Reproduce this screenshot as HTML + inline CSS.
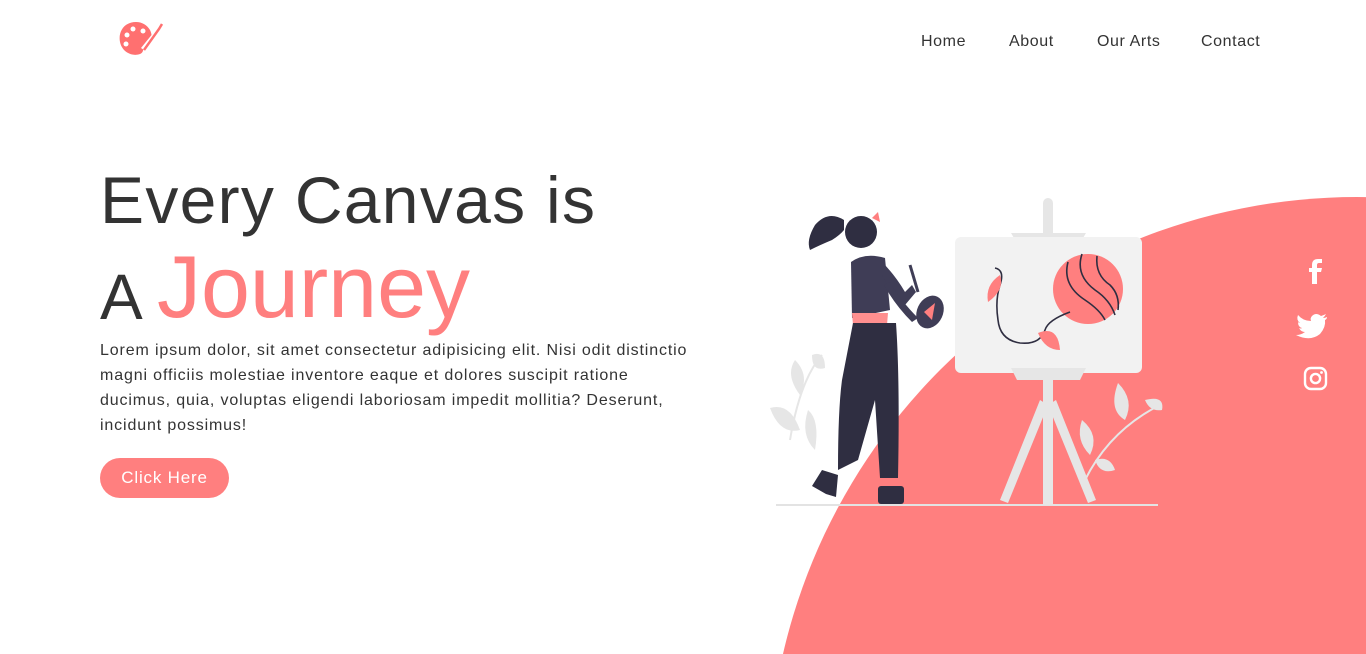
<!DOCTYPE html>
<html><head><meta charset="utf-8"><style>
*{margin:0;padding:0;box-sizing:border-box}
html,body{width:1366px;height:654px;overflow:hidden}
body{background:#fff;font-family:"Liberation Sans",sans-serif;color:#333;position:relative}
.nav a{position:absolute;top:33px;font-size:16px;color:#333;text-decoration:none;letter-spacing:.6px}
h1{position:absolute;left:100px;font-weight:normal;white-space:nowrap}
.p{position:absolute;left:100px;top:338px;font-size:16px;line-height:25px;color:#333;white-space:nowrap;letter-spacing:.86px}
.btn{position:absolute;left:100px;top:458px;width:129px;height:40px;border-radius:20px;background:#ff7f7f;color:#fff;font-size:17px;text-align:center;line-height:40px;letter-spacing:.8px}
svg{position:absolute;left:0;top:0}
</style></head><body>
<svg width="1366" height="654" viewBox="0 0 1366 654">
<circle cx="1357" cy="786" r="589" fill="#ff7f7f"/>
<path d="M136 22 C124 22 118 32 120 42 C122 52 132 57 140 54 C145 52 142 47 146 45 C152 43 153 36 150 30 C147 25 142 22 136 22Z" fill="#ff7070"/>
<circle cx="133" cy="29" r="2.5" fill="#fff"/><circle cx="127" cy="35" r="2.5" fill="#fff"/><circle cx="143" cy="31" r="2.5" fill="#fff"/><circle cx="126" cy="44" r="2.5" fill="#fff"/>
<path d="M141 48 L158 27 L161 24 L160 28 L144 50Z" fill="#fff"/><path d="M144 50 L159 29 L162 24" stroke="#ff7070" stroke-width="2.5" fill="none"/>
<line x1="776" y1="505" x2="1158" y2="505" stroke="#e3e3e3" stroke-width="2"/>
<g fill="#e6e6e6"><path d="M790 440 Q800 380 822 355" stroke="#e6e6e6" stroke-width="2" fill="none"/>
<path d="M795 360 Q785 375 800 395 Q810 375 795 360Z"/><path d="M812 355 Q825 350 825 368 Q812 372 812 355Z"/><path d="M770 408 Q790 402 800 430 Q780 435 770 408Z"/><path d="M808 410 Q820 420 815 450 Q800 435 808 410Z"/></g>
<g fill="#e6e6e6">
<rect x="1043" y="198" width="10" height="40" rx="5"/>
<path d="M1011 233 H1086 L1080 243 H1017Z"/>
<rect x="955" y="237" width="187" height="136" rx="6" fill="#f2f2f2"/>
<path d="M1011 368 H1086 L1080 380 H1017Z"/>
<rect x="1043" y="378" width="10" height="127"/>
<path d="M1040 400 L1000 500 L1008 503 L1048 405Z"/><path d="M1056 400 L1096 500 L1088 503 L1048 405Z"/>
</g>
<circle cx="1088" cy="289" r="35" fill="#ff7f7f"/>
<g stroke="#2f2e41" stroke-width="1.6" fill="none">
<path d="M1068 262 Q1062 285 1085 300 Q1100 310 1105 320"/><path d="M1082 254 Q1075 275 1095 290 Q1110 300 1115 315"/><path d="M1097 256 Q1095 275 1110 285 Q1120 295 1118 310"/>
<path d="M1070 312 Q1048 320 1045 330 Q1040 345 1020 343 Q1000 340 998 320 Q995 300 1000 285 Q1005 270 995 268"/></g>
<path d="M988 302 Q985 285 1000 275 Q1005 290 988 302Z" fill="#ff7f7f"/><path d="M1038 333 Q1058 325 1060 350 Q1045 350 1038 333Z" fill="#ff7f7f"/>
<g fill="#e6e6e6"><path d="M1085 480 Q1110 430 1160 405" stroke="#e6e6e6" stroke-width="2" fill="none"/>
<path d="M1082 420 Q1075 440 1090 455 Q1100 435 1082 420Z"/><path d="M1118 383 Q1108 410 1125 420 Q1135 400 1118 383Z"/><path d="M1145 400 Q1165 395 1162 410 Q1150 412 1145 400Z"/><path d="M1095 460 Q1110 455 1115 470 Q1100 475 1095 460Z"/></g>
<path d="M844 220 Q828 210 815 225 Q806 240 810 250 Q820 245 832 240 Q840 235 844 230Z" fill="#2f2e41"/>
<circle cx="861" cy="232" r="16" fill="#2f2e41"/>
<path d="M872 218 L878 212 L880 222 Z" fill="#ff7f7f"/>
<path d="M851 262 Q865 252 885 258 L890 310 L852 318Z" fill="#3f3d56"/>
<path d="M882 262 Q895 275 905 292 L912 285 L916 292 L905 305 Q890 290 882 275Z" fill="#3f3d56"/>
<path d="M884 285 Q895 305 912 322 L918 318 Q900 300 890 282Z" fill="#3f3d56"/>
<ellipse cx="930" cy="312" rx="13" ry="17" transform="rotate(25 930 312)" fill="#3f3d56"/>
<path d="M924 312 L935 303 L932 320Z" fill="#ff7f7f"/>
<line x1="910" y1="265" x2="918" y2="292" stroke="#3f3d56" stroke-width="3"/>
<path d="M852 313 L888 313 L887 325 L853 325Z" fill="#ff8f8f"/>
<path d="M853 323 L896 323 Q900 380 898 478 L880 478 L875 400 L858 460 L838 470 Q838 410 842 380 Z" fill="#2f2e41"/>
<path d="M822 470 L838 475 L836 497 L826 494 L812 486Z" fill="#2f2e41"/>
<rect x="878" y="486" width="26" height="18" rx="3" fill="#2f2e41"/>
<g fill="#fff">
<path d="M1317 284 V272 H1321 L1322 268 H1317 V265 Q1317 263 1319 263 H1322 V259 H1318 Q1312 259 1312 265 V268 H1309 V272 H1312 V284Z"/>
<path d="M1327 317 Q1325 318 1323 318 Q1325 316 1326 314 Q1324 315 1321 316 Q1316 312 1312 316 Q1310 318 1311 321 Q1303 321 1298 315 Q1296 320 1300 323 Q1299 323 1298 322 Q1298 327 1302 328 Q1301 329 1299 328 Q1301 332 1305 332 Q1301 335 1296 335 Q1310 342 1320 334 Q1326 327 1325 320 Q1327 319 1327 317Z"/>
</g>
<rect x="1305" y="368" width="21" height="21" rx="6" fill="none" stroke="#fff" stroke-width="2.4"/>
<circle cx="1315.5" cy="378.5" r="4.6" fill="none" stroke="#fff" stroke-width="2.4"/>
<circle cx="1321.5" cy="372.5" r="1.4" fill="#fff"/>
</svg>
<div class="nav"><a style="left:921px">Home</a><a style="left:1009px">About</a><a style="left:1097px">Our Arts</a><a style="left:1201px">Contact</a></div>
<h1 style="top:162px;font-size:66px;letter-spacing:1.3px">Every Canvas is</h1>
<h1 style="top:238px;font-size:64px">A <span style="color:#ff7f7f;font-size:88px;letter-spacing:0;position:relative;top:-2px">Journey</span></h1>
<div class="p">Lorem ipsum dolor, sit amet consectetur adipisicing elit. Nisi odit distinctio<br>magni officiis molestiae inventore eaque et dolores suscipit ratione<br>ducimus, quia, voluptas eligendi laboriosam impedit mollitia? Deserunt,<br>incidunt possimus!</div>
<div class="btn">Click Here</div>
</body></html>
